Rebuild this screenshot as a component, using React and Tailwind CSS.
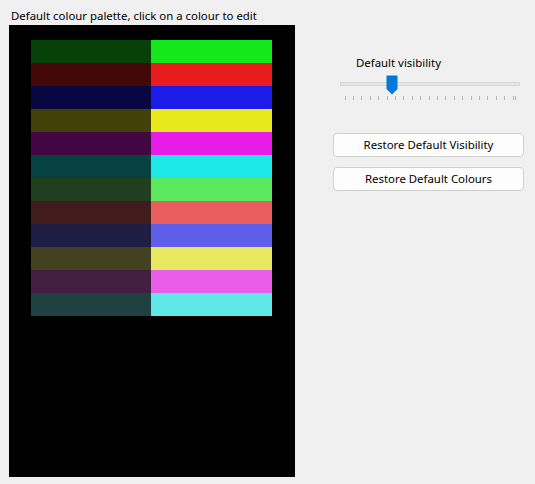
import React from 'react';

const ROWS = [
    ['#064208', '#14e81c'],
    ['#450808', '#e81c1c'],
    ['#070842', '#1c1ce8'],
    ['#424208', '#e8e81c'],
    ['#420742', '#e81ce8'],
    ['#064242', '#1ce8e8'],
    ['#1f3f1f', '#5ce85c'],
    ['#421c1c', '#e85e5e'],
    ['#1e1e45', '#5e5ee8'],
    ['#42421e', '#e8e85e'],
    ['#421e42', '#e85ee8'],
    ['#1e4242', '#5ee8e8'],
];

function Slider() {
    const ticks = [];
    for (let i = 0; i <= 20; i++) ticks.push(4.5 + i * 8.4);
    return (
        <div className="relative w-[180px] h-[30px]">
            <div className="absolute left-0 right-0 top-[7px] h-[4px] bg-[#e7e7e7] border border-[#d6d6d6]" />
            <svg className="absolute left-[46px] top-0" width="12" height="20" viewBox="0 0 12 20">
                <path d="M0.5 0.5 H11.5 V14 L6 19.5 L0.5 14 Z" fill="#0078d7" />
            </svg>
            <svg className="absolute left-0 top-[21px]" width="180" height="6" viewBox="0 0 180 6">
                {ticks.map((x, i) => (
                    <rect key={i} x={Math.round(x)} y="0" width="1" height="4" fill="#b4b4b4" />
                ))}
                <rect x="175" y="0" width="1" height="4" fill="#b4b4b4" />
            </svg>
        </div>
    );
}

export default function App() {
    return (
        <div className="w-[535px] h-[484px] bg-[#f0f0f0] flex text-[11.4px] text-black" style={{ fontFamily: '"Segoe UI", "Noto Sans", sans-serif' }}>
            <div className="flex flex-col pl-[9px] pt-[8px]">
                <div className="pl-[2px] h-[17px] leading-[16px]">Default colour palette, click on a colour to edit</div>
                <div className="w-[286px] h-[452px] bg-black pl-[22px] pt-[15px]">
                    {ROWS.map(([a, b], i) => (
                        <div key={i} className="flex h-[23px] cursor-pointer">
                            <div className="w-[120px]" style={{ background: a }} />
                            <div className="w-[121px]" style={{ background: b }} />
                        </div>
                    ))}
                </div>
            </div>
            <div className="flex flex-col ml-[38px] pt-[55px] w-[191px]">
                <div className="pl-[23px] h-[20px] leading-[16px]">Default visibility</div>
                <div className="pl-[7px]">
                    <Slider />
                </div>
                <div className="flex flex-col gap-[10px] mt-[28px]">
                    <button className="h-[24px] w-[191px] bg-[#fdfdfd] border border-[#d0d0d0] rounded-[4px] text-[11.4px]">Restore Default Visibility</button>
                    <button className="h-[24px] w-[191px] bg-[#fdfdfd] border border-[#d0d0d0] rounded-[4px] text-[11.4px]">Restore Default Colours</button>
                </div>
            </div>
        </div>
    );
}
